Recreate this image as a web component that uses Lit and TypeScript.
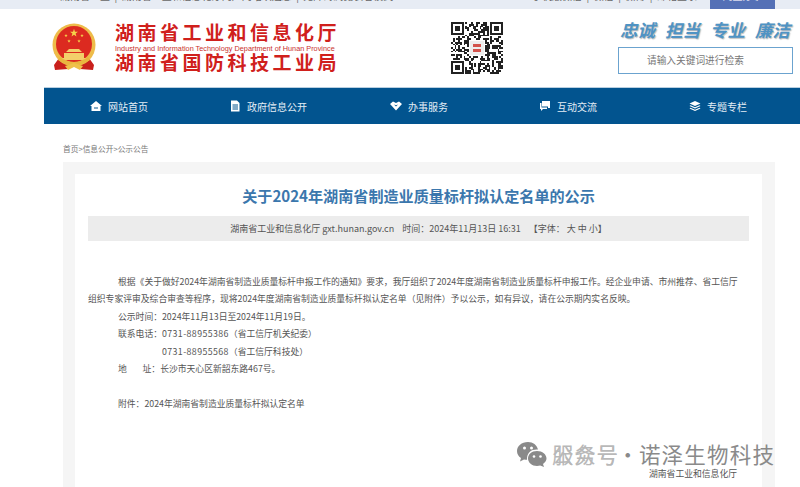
import { LitElement, html, css, svg } from "lit";
import { customElement } from "lit/decorators.js";

const qrCells = (() => {
  const n = 29;
  const out: [number, number][] = [];
  let s = 1234577;
  const finder = (x: number, y: number) => x < 8 && y < 8;
  for (let y = 0; y < n; y++)
    for (let x = 0; x < n; x++) {
      s = (s * 1103515245 + 12345) & 0x7fffffff;
      const inF = finder(x, y) || finder(n - 1 - x, y) || finder(x, n - 1 - y);
      const inC = x > 9 && x < 19 && y > 9 && y < 19;
      if (!inF && !inC && (s >> 16) % 100 < 52) out.push([x, y]);
    }
  return out;
})();

const star = (cx: number, cy: number, r: number) => {
  const pts: string[] = [];
  for (let i = 0; i < 10; i++) {
    const a = (-90 + i * 36) * Math.PI / 180;
    const q = i % 2 ? r * 0.4 : r;
    pts.push(`${(cx + q * Math.cos(a)).toFixed(2)},${(cy + q * Math.sin(a)).toFixed(2)}`);
  }
  return pts.join(" ");
};

@customElement("app-root")
export class AppRoot extends LitElement {
  static styles = css`
    :host { display: block; width: 800px; height: 487px; overflow: hidden; background: #fff; position: relative;
      font-family: "Microsoft YaHei", "Noto Sans CJK SC", "Liberation Sans", sans-serif; color: #444; }
    * { box-sizing: border-box; }
    .top { height: 9px; background: #e7ecf4; padding-left: 60px; padding-right: 25px; overflow: hidden; display: flex; }
    .top-l, .top-r { font-size: 10px; line-height: 10px; margin-top: -9px; color: #666; white-space: pre; }
    .top-r { margin-left: auto; margin-right: 13px; }
    .top-btn { width: 65px; height: 9px; background: #5470b6; color: #dde; font-size: 10px; line-height: 10px; text-align: center; overflow: hidden; flex: none; }
    .top-btn span { display: block; margin-top: -9px; }
    .head { height: 78px; display: flex; padding-left: 52px; }
    .emblem { width: 44px; height: 48px; margin-top: 14px; flex: none; }
    .logo { margin-left: 19px; margin-top: 11px; width: 223px; color: #d0201c; flex: none; }
    .logo-zh { font-size: 19px; font-weight: 700; line-height: 23px; white-space: nowrap; letter-spacing: 3.5px; }
    .z2 { letter-spacing: 3.5px; margin-top: -3px; }
    .logo-en { font-size: 7.3px; line-height: 9px; white-space: nowrap; font-family: "Liberation Sans", sans-serif; margin-top: 1px; color: #c9302c; }
    .qr { width: 52px; height: 52px; margin-left: 113px; margin-top: 13px; flex: none; }
    .right { margin-left: 115px; width: 175px; flex: none; }
    .motto { font-size: 17.5px; font-weight: 700; font-style: italic; color: #4f93c4; text-shadow: 1px 1px 1px #bbb; white-space: nowrap; margin-top: 10px; line-height: 21px; display: flex; justify-content: space-between; padding: 0 3px 0 2px; }
    .search { height: 27px; margin-top: 7px; border: 1px solid #6ba3cf; color: #777; font-size: 9.7px; line-height: 25px; padding-left: 28px; background: #fff; }
    .nav { margin-left: 44px; height: 37px; background: #02548f; border-top: 1px solid #b9cfe0; display: flex; color: #e4eef6; font-size: 10px; }
    .nav-item { width: 150px; display: flex; align-items: center; gap: 6px; flex: none; white-space: nowrap; }
    .nav-item:nth-child(1) { margin-left: 46px; width: 139px; }
    .nav-item:nth-child(2) { width: 161px; }
    .nav-item:nth-child(3) { width: 149px; }
    .nav-item:nth-child(4) { width: 150px; }
    .nav-item svg { width: 12px; height: 12px; fill: #fff; flex: none; }
    .crumb { margin: 19px 0 0 63px; height: 19px; font-size: 7.7px; line-height: 12px; color: #777; }
    .panel { margin: 0 25px 0 63px; background: #f5f5f5; padding: 12px 13px 0 12px; height: 340px; }
    .card { background: #fff; height: 340px; padding: 0 13px; }
    h1 { margin: 0; padding-top: 11px; height: 42px; text-align: center; font-size: 15.1px; line-height: 20px; font-weight: 700; color: #3b77ad; font-family: "Microsoft YaHei", "Noto Sans CJK SC", "Liberation Sans", sans-serif; }
    .meta { height: 25px; background: #ececec; text-align: center; font-size: 9px; line-height: 25px; color: #555; white-space: pre; }
    .body { margin-top: 32px; font-size: 8.8px; line-height: 17.45px; color: #555; }
    .body p { margin: 0; padding-left: 30px; white-space: pre; }
    .body p.flush { padding-left: 0; }
    .body p.ind { padding-left: 74px; }
    .body p.gap { margin-top: 17.6px; }
    .num { letter-spacing: 0.4px; }
    .sign { position: absolute; left: 649px; top: 467px; font-size: 8.8px; line-height: 14px; color: #555; white-space: nowrap; }
    .wm { position: absolute; left: 516px; top: 439px; display: flex; align-items: center; height: 28px; color: #8a8a8a; font-size: 21.5px; white-space: nowrap; }
    .wm svg { width: 31px; height: 26px; flex: none; margin-right: 5px; margin-top: 2px; }
    .wm-text { letter-spacing: 0.8px; position: relative; display: flex; }
    .wm-dot { margin-left: -2px; width: 22px; }
    .wm-name { letter-spacing: 1.2px; }
    .wm-a { opacity: .6; position: relative; }
    .wm-over { position: absolute; left: 0; top: 0; }
  `;

  render() {
    return html`
      <div class="top">
        <div class="top-l">湖南省工业  |  湖南省工业和信息化厅门户网站欢迎您  |  无障碍浏览长者模式</div>
        <div class="top-r">手机版微信  |  微信  |  微博  |  邮箱登录</div>
        <div class="top-btn"><span>网上办事</span></div>
      </div>
      <div class="head">
        <svg class="emblem" viewBox="0 0 44 48">
          <path d="M7 35 L2 42 L3 47 L16 46 L22 43 L28 46 L41 47 L42 42 L37 35 Z" fill="#c9201c"/>
          <circle cx="22" cy="22" r="21.5" fill="#eebc4a"/>
          <circle cx="22" cy="21" r="18" fill="#dc2a20"/>
          <polygon points="${star(22, 10, 4.2)}" fill="#f5d24a"/>
          <polygon points="${star(14, 12.5, 1.8)}" fill="#f5d24a"/>
          <polygon points="${star(30, 12.5, 1.8)}" fill="#f5d24a"/>
          <polygon points="${star(17, 18, 1.8)}" fill="#f5d24a"/>
          <polygon points="${star(27, 18, 1.8)}" fill="#f5d24a"/>
          <path d="M17 26 h10 l3 3 h-16 Z M12 30 h20 v5 h-20 Z M8 35 h28 v2 h-28Z" fill="#f3cf6a"/>
          <path d="M8 34 Q22 44 36 34 L38 37 Q22 48 6 37 Z" fill="#e9b63f"/>
          <path d="M13 43 L22 40 L31 43 L28 47 L22 44 L16 47 Z" fill="#efc04a"/>
        </svg>
        <div class="logo">
          <div class="logo-zh">湖南省工业和信息化厅</div>
          <div class="logo-en">Industry and Information Technology Department of Hunan Province</div>
          <div class="logo-zh z2">湖南省国防科技工业局</div>
        </div>
        <svg class="qr" viewBox="0 0 29 29" shape-rendering="crispEdges">
          ${qrCells.map(([x, y]) => svg`<rect x=${x} y=${y} width="1" height="1" fill="#222"/>`)}
          ${[[0, 0], [22, 0], [0, 22]].map(([x, y]) => svg`
            <rect x=${x} y=${y} width="7" height="7" fill="#222"/>
            <rect x=${x + 1} y=${y + 1} width="5" height="5" fill="#fff"/>
            <rect x=${x + 2} y=${y + 2} width="3" height="3" fill="#222"/>`)}
          <rect x="10.5" y="10.5" width="8" height="8" rx="1" fill="#eee"/>
          <rect x="12" y="12" width="5" height="2" fill="#d3534c"/>
          <rect x="12" y="15" width="5" height="2" fill="#d3534c"/>
        </svg>
        <div class="right">
          <div class="motto"><span>忠诚</span><span>担当</span><span>专业</span><span>廉洁</span></div>
          <div class="search">请输入关键词进行检索</div>
        </div>
      </div>
      <div class="nav">
        <div class="nav-item"><svg viewBox="0 0 12 12"><path d="M6 1 L12 6 L10.5 6 L10.5 11 L1.5 11 L1.5 6 L0 6 Z M4 7.5 v1 h4 v-1 Z" fill-rule="evenodd"/></svg>网站首页</div>
        <div class="nav-item"><svg viewBox="0 0 12 12"><path d="M2 0.5 H8 L10.5 3 V11.5 H2 Z M3.5 4.5 v1 h5.5 v-1 Z M3.5 6.5 v1 h5.5 v-1 Z M3.5 8.5 v1 h5.5 v-1 Z" fill-rule="evenodd"/></svg>政府信息公开</div>
        <div class="nav-item"><svg viewBox="0 0 12 12"><path d="M0 4 L3 1.5 L6 3 L9 1.5 L12 4 L6 10.5 Z M4 4.5 L6 6.5 L8 4.5 L6 5.2 Z" fill-rule="evenodd"/></svg>办事服务</div>
        <div class="nav-item"><svg viewBox="0 0 12 12"><path d="M3 1 H11 V8 H9 V6.5 H3 Z M1 3 H2.5 V7.5 H8 V9 H4 L2 11 V9 H1 Z"/></svg>互动交流</div>
        <div class="nav-item"><svg viewBox="0 0 12 12"><path d="M6 1 L11.5 3.5 L6 6 L.5 3.5 Z M1.5 5.3 L6 7.3 L10.5 5.3 L11.5 6 L6 8.5 L.5 6 Z M1.5 7.8 L6 9.8 L10.5 7.8 L11.5 8.5 L6 11 L.5 8.5 Z"/></svg>专题专栏</div>
      </div>
      <div class="crumb">首页&gt;信息公开&gt;公示公告</div>
      <div class="panel">
        <div class="card">
          <h1>关于2024年湖南省制造业质量标杆拟认定名单的公示</h1>
          <div class="meta">湖南省工业和信息化厅 gxt.hunan.gov.cn    时间：2024年11月13日 16:31    【字体： 大 中 小】</div>
          <div class="body">
            <p>根据《关于做好2024年湖南省制造业质量标杆申报工作的通知》要求，我厅组织了2024年度湖南省制造业质量标杆申报工作。经企业申请、市州推荐、省工信厅</p>
            <p class="flush">组织专家评审及综合审查等程序，现将2024年度湖南省制造业质量标杆拟认定名单（见附件）予以公示，如有异议，请在公示期内实名反映。</p>
            <p>公示时间：2024年11月13日至2024年11月19日。</p>
            <p>联系电话：<span class="num">0731-88955386</span>（省工信厅机关纪委）</p>
            <p class="ind"><span class="num">0731-88955568</span>（省工信厅科技处）</p>
            <p>地        址：长沙市天心区新韶东路467号。</p>
            <p class="gap">附件：2024年湖南省制造业质量标杆拟认定名单</p>
          </div>
        </div>
      </div>
      <div class="sign">湖南省工业和信息化厅</div>
      <div class="wm">
        <svg viewBox="0 0 31 26">
          <path d="M12 1 C5.5 1 1 5 1 10 C1 13 2.5 15.5 5 17 L4 20.5 L8 18.4 C9 18.7 10 18.8 11 18.8 C10.6 11 16 8 22 8.5 C21 4 17 1 12 1 Z" fill="#8a8a8a"/>
          <circle cx="8.5" cy="7" r="1.5" fill="#fff"/><circle cx="15.5" cy="7" r="1.5" fill="#fff"/>
          <path d="M21 10 C15.5 10 12 13.5 12 17.5 C12 21.5 16 25 21 25 C22.3 25 23.3 24.8 24.2 24.5 L28 26 L27 23 C29 21.5 30.5 19.6 30.5 17.5 C30.5 13.5 26.5 10 21 10 Z" fill="#8a8a8a"/>
          <circle cx="18" cy="15.5" r="1.3" fill="#fff"/><circle cx="24.5" cy="15.5" r="1.3" fill="#fff"/>
        </svg>
        <span class="wm-text"><span class="wm-a">服务号<span class="wm-over">公众号</span></span><span class="wm-dot">·</span><span class="wm-name">诺泽生物科技</span></span>
      </div>
    `;
  }
}
